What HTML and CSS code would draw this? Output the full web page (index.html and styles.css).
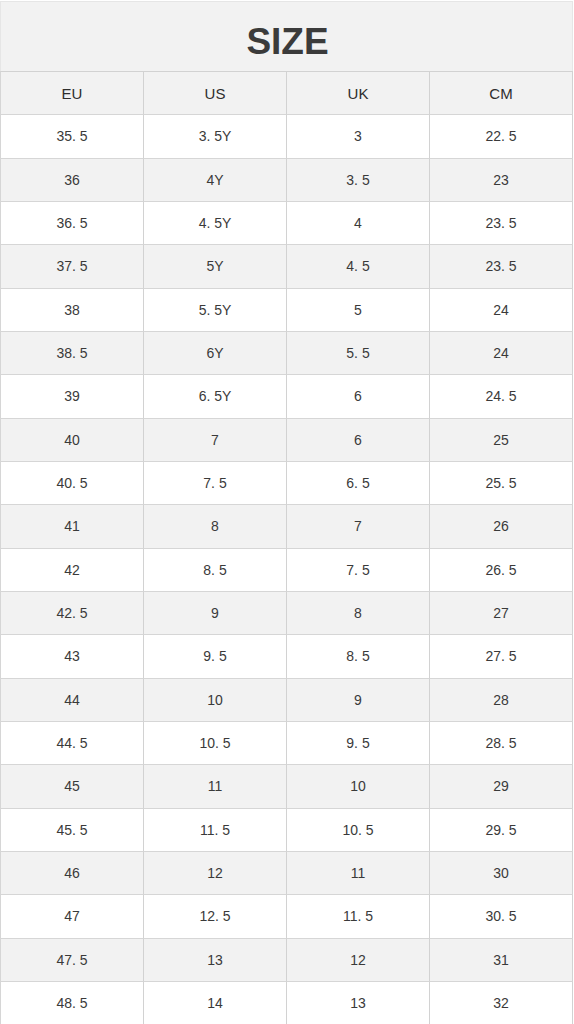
FILE: index.html
```html
<!DOCTYPE html>
<html>
<head>
<meta charset="utf-8">
<link rel="stylesheet" href="styles.css">
</head>
<body>
<div class="chart">
  <div class="title">SIZE</div>
  <div class="grid">
    <div class="cell head">EU</div><div class="cell head">US</div><div class="cell head">UK</div><div class="cell head">CM</div>
    <div class="cell">35. 5</div><div class="cell">3. 5Y</div><div class="cell">3</div><div class="cell">22. 5</div>
    <div class="cell alt">36</div><div class="cell alt">4Y</div><div class="cell alt">3. 5</div><div class="cell alt">23</div>
    <div class="cell">36. 5</div><div class="cell">4. 5Y</div><div class="cell">4</div><div class="cell">23. 5</div>
    <div class="cell alt">37. 5</div><div class="cell alt">5Y</div><div class="cell alt">4. 5</div><div class="cell alt">23. 5</div>
    <div class="cell">38</div><div class="cell">5. 5Y</div><div class="cell">5</div><div class="cell">24</div>
    <div class="cell alt">38. 5</div><div class="cell alt">6Y</div><div class="cell alt">5. 5</div><div class="cell alt">24</div>
    <div class="cell">39</div><div class="cell">6. 5Y</div><div class="cell">6</div><div class="cell">24. 5</div>
    <div class="cell alt">40</div><div class="cell alt">7</div><div class="cell alt">6</div><div class="cell alt">25</div>
    <div class="cell">40. 5</div><div class="cell">7. 5</div><div class="cell">6. 5</div><div class="cell">25. 5</div>
    <div class="cell alt">41</div><div class="cell alt">8</div><div class="cell alt">7</div><div class="cell alt">26</div>
    <div class="cell">42</div><div class="cell">8. 5</div><div class="cell">7. 5</div><div class="cell">26. 5</div>
    <div class="cell alt">42. 5</div><div class="cell alt">9</div><div class="cell alt">8</div><div class="cell alt">27</div>
    <div class="cell">43</div><div class="cell">9. 5</div><div class="cell">8. 5</div><div class="cell">27. 5</div>
    <div class="cell alt">44</div><div class="cell alt">10</div><div class="cell alt">9</div><div class="cell alt">28</div>
    <div class="cell">44. 5</div><div class="cell">10. 5</div><div class="cell">9. 5</div><div class="cell">28. 5</div>
    <div class="cell alt">45</div><div class="cell alt">11</div><div class="cell alt">10</div><div class="cell alt">29</div>
    <div class="cell">45. 5</div><div class="cell">11. 5</div><div class="cell">10. 5</div><div class="cell">29. 5</div>
    <div class="cell alt">46</div><div class="cell alt">12</div><div class="cell alt">11</div><div class="cell alt">30</div>
    <div class="cell">47</div><div class="cell">12. 5</div><div class="cell">11. 5</div><div class="cell">30. 5</div>
    <div class="cell alt">47. 5</div><div class="cell alt">13</div><div class="cell alt">12</div><div class="cell alt">31</div>
    <div class="cell">48. 5</div><div class="cell">14</div><div class="cell">13</div><div class="cell">32</div>
  </div>
</div>
</body>
</html>
```
FILE: styles.css
```css
html, body {
  margin: 0;
  padding: 0;
  background: #ffffff;
}
.chart {
  width: 573px;
  font-family: "Liberation Sans", Arial, sans-serif;
  color: #3a3a3a;
}
.title {
  height: 59px;
  margin-top: 1px;
  padding-top: 10px;
  background: #f2f2f2;
  border-top: 1px solid #e6e6e6;
  border-left: 1px solid #e6e6e6;
  border-right: 1px solid #e6e6e6;
  display: flex;
  align-items: center;
  justify-content: center;
  font-size: 37px;
  font-weight: bold;
  color: #3b3b3b;
  padding-left: 2px;
}
.grid {
  display: grid;
  grid-template-columns: repeat(4, 1fr);
  grid-auto-rows: 43.33px;
  border-top: 1px solid #d2d2d2;
  border-left: 1px solid #d6d6d6;
}
.cell {
  display: flex;
  align-items: center;
  justify-content: center;
  border-right: 1px solid #d2d2d2;
  border-bottom: 1px solid #d6d6d6;
  font-size: 14px;
  color: #3a3a3a;
  background: #ffffff;
}
.cell.head {
  background: #f2f2f2;
  font-size: 15px;
  color: #2e2e2e;
}
.cell.alt {
  background: #f2f2f2;
}
```
